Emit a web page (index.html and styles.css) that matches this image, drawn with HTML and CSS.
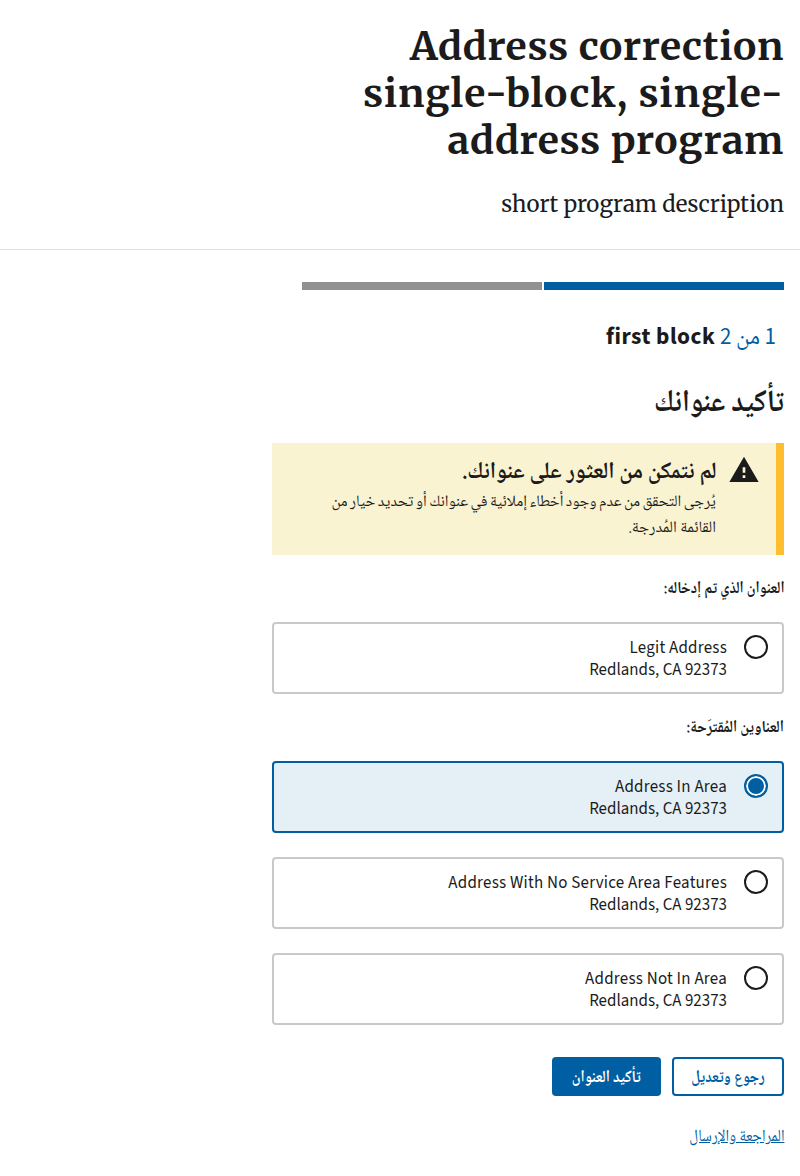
FILE: index.html
```html
<!DOCTYPE html>
<html lang="ar" dir="rtl">
<head>
<meta charset="utf-8">
<title>Address correction</title>
<link rel="stylesheet" href="styles.css">
</head>
<body>
<header class="intro">
  <h1><span class="line">Address correction</span><span class="line hyphenated" dir="ltr">single-block, single-</span><span class="line">address program</span></h1>
  <p><span class="line">short program description</span></p>
</header>
<main>
  <div class="progress"><span class="segment current"></span><span class="segment"></span></div>
  <h2 class="step"><span class="count">1 من 2</span> <span class="step-name">first block</span></h2>
  <h2 class="title"><span class="narrow">تأكيد عنوانك</span></h2>
  <section class="alert">
    <svg class="warning" viewBox="0 0 24 24"><path d="M1 21h22L12 2 1 21zm12-3h-2v-2h2v2zm0-4h-2v-4h2v4z"/></svg>
    <div class="alert-body">
      <h3><span class="narrow">لم نتمكن من العثور على عنوانك.</span></h3>
      <p><span class="narrow tight">يُرجى التحقق من عدم وجود أخطاء إملائية في عنوانك أو تحديد خيار من</span><span class="narrow">القائمة المُدرجة.</span></p>
    </div>
  </section>
  <h4 class="entered"><span class="narrow">العنوان الذي تم إدخاله:</span></h4>
  <label class="option"><span class="radio"></span><span class="address"><span class="street">Legit Address</span><span>Redlands, CA 92373</span></span></label>
  <h4 class="suggested"><span class="narrow">العناوين المُقترَحة:</span></h4>
  <label class="option selected"><span class="radio"></span><span class="address"><span class="street">Address In Area</span><span>Redlands, CA 92373</span></span></label>
  <label class="option"><span class="radio"></span><span class="address"><span class="street">Address With No Service Area Features</span><span>Redlands, CA 92373</span></span></label>
  <label class="option"><span class="radio"></span><span class="address"><span class="street">Address Not In Area</span><span>Redlands, CA 92373</span></span></label>
  <div class="actions"><button class="button outline"><span class="narrow">رجوع وتعديل</span></button><button class="button"><span class="narrow">تأكيد العنوان</span></button></div>
  <a class="review narrow" href="#">المراجعة والإرسال</a>
</main>
</body>
</html>
```
FILE: styles.css
```css
* { box-sizing: border-box; }
body { margin: 0; background: #fff; color: #1b1b1b; font-family: "Source Sans Pro", "Source Sans 3", "Noto Sans CJK SC", "Noto Naskh Arabic", "Noto Sans", "DejaVu Sans", sans-serif; font-size: 16.96px; }
h1, h2, h3, h4, p { margin: 0; }
.narrow { display: inline-block; transform-origin: right center; white-space: nowrap; font-family: "Noto Naskh Arabic", "Noto Sans", sans-serif; }
.intro { height: 250px; padding: 23px 16px 0; border-bottom: 1px solid #dfe1e2; font-family: Merriweather, "Noto Serif", "DejaVu Serif", serif; }
.line { display: block; white-space: nowrap; text-align: right; }
h1 { font-size: 39.04px; line-height: 47px; letter-spacing: .62px; }
.hyphenated { letter-spacing: 1.05px; }
.intro p { margin-top: 24px; font-size: 22.25px; line-height: 32px; }
main { width: 544px; padding: 32px 16px 0; }
.progress { display: flex; gap: 2px; }
.segment { width: 240px; height: 8px; background: #919191; }
.segment.current { background: #005ea2; }
.step { height: 32px; margin-top: 31px; padding-right: 8px; font-size: 23.36px; line-height: 32px; white-space: nowrap; }
.step-name { letter-spacing: .5px; }
.count { color: #005ea2; font-weight: 400; font-size: 23px; }
.title { height: 40px; margin-top: 28px; font-size: 31px; line-height: 40px; }
.title .narrow { transform: scaleX(.885); }
.alert { display: flex; height: 112px; margin-top: 22px; padding: 12px 16px; border-right: 8px solid #ffbe2e; background: #faf3d1; }
.warning { width: 32px; height: 32px; flex: none; fill: #1b1b1b; margin-top: -1px; }
.alert-body { width: 0; flex: 1; padding-right: 12px; }
.alert h3 { margin: 0 0 4px; font-size: 23.36px; line-height: 31px; height: 31px; }
.alert h3 .narrow { transform: scaleX(.945); }
.alert p { display: flex; flex-direction: column; align-items: flex-start; font-size: 16px; line-height: 26px; }
.tight { word-spacing: -1px; transform: scaleX(.966); }
h4 { height: 24px; font-size: 16.96px; line-height: 24px; }
.entered { margin-top: 21px; }
.entered .narrow { transform: scaleX(.85); }
.suggested .narrow { transform: scaleX(.864); }
.option { display: flex; height: 72px; margin-top: 22px; padding: 11px 14px; border: 2px solid #c9c9c9; border-radius: 4px; }
.radio { width: 24px; height: 24px; flex: none; border: 2px solid #1b1b1b; border-radius: 50%; background: #fff; }
.address { display: flex; flex-direction: column; padding: 2px 17px 0; line-height: 22px; }
.street { letter-spacing: .24px; }
.suggested { margin-top: 21px; }
.option + .option { margin-top: 24px; }
.selected { border-color: #005ea2; background: #e5f0f6; }
.selected .radio { border-color: #005ea2; background: #005ea2; box-shadow: inset 0 0 0 2px #fff; }
.actions { display: flex; gap: 11px; margin-top: 32px; }
.button { display: flex; align-items: center; justify-content: center; width: 109px; height: 39px; padding: 3px 0 0; border: 0; border-radius: 4px; background: #005ea2; color: #fff; font: bold 16.96px "Noto Naskh Arabic", "Noto Sans", "DejaVu Sans", sans-serif; }
.button .narrow { transform-origin: center; transform: scaleX(.855); }
.outline { width: 112px; border: 2px solid #005ea2; background: #fff; color: #005ea2; }
.review { margin-top: 30px; font-size: 16.96px; line-height: 24px; color: #005ea2; transform: scaleX(.885); }
```
